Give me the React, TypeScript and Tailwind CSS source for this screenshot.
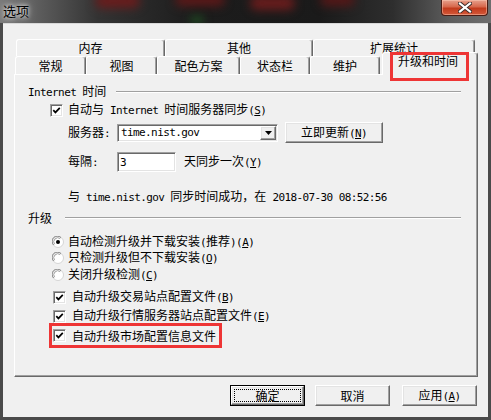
import React from 'react';

const MONO = "font-['DejaVu_Sans_Mono',monospace] text-[11px] tracking-[-0.6px]";

const A = ({ children }: { children: React.ReactNode }) => <span className={MONO}>{children}</span>;
const Mn = ({ k }: { k: string }) => (
  <span className={MONO}>
    (<span className="underline underline-offset-1">{k}</span>)
  </span>
);

const SUNKEN =
  'border border-t-[#a0a0a0] border-l-[#a0a0a0] border-b-white border-r-white shadow-[inset_1px_1px_0_#696969,inset_-1px_-1px_0_#e3e3e3] bg-white';
const RAISED =
  'border border-t-white border-l-white border-b-[#696969] border-r-[#696969] shadow-[inset_-1px_-1px_0_#a0a0a0,inset_1px_1px_0_#e3e3e3] bg-[#f0f0f0]';
const TAB =
  'h-full flex items-center justify-center border-t border-l border-r border-t-white border-l-white border-r-[#696969] shadow-[inset_-1px_0_0_#a0a0a0] rounded-t-[3px] bg-[#f0f0f0]';

function Check() {
  return (
    <div className={`w-[13px] h-[13px] shrink-0 flex items-center justify-center ${SUNKEN}`}>
      <svg width="9" height="9" viewBox="0 0 9 9">
        <path d="M1.3 4.2 L3.4 6.4 L7.8 1.8" stroke="#000" strokeWidth="1.7" fill="none" />
      </svg>
    </div>
  );
}

function Radio({ on }: { on?: boolean }) {
  return (
    <svg width="12" height="12" viewBox="0 0 12 12" className="shrink-0">
      <circle cx="6" cy="6" r="5.5" fill="#fff" stroke="#d4d4d4" />
      <path d="M1.6 9 A5 5 0 0 1 9 1.6" stroke="#808080" fill="none" />
      <path d="M2.6 8.2 A4 4 0 0 1 8.2 2.6" stroke="#a0a0a0" fill="none" />
      {on && <circle cx="6" cy="6" r="2" fill="#000" />}
    </svg>
  );
}

function Group({ children, gap }: { children: React.ReactNode; gap: string }) {
  return (
    <div className="flex items-center h-[12px] pl-[13px] pr-[16px]">
      <span className="whitespace-nowrap">{children}</span>
      <div className={`flex-1 h-[2px] border-t border-t-[#a0a0a0] border-b border-b-white ${gap}`} />
    </div>
  );
}

export default function App() {
  return (
    <div className="w-[491px] h-[420px] bg-[#4a4a4a] flex flex-col overflow-hidden font-['Noto_Sans_CJK_SC','Noto_Sans_CJK_JP',sans-serif] text-[12px] leading-[12px] text-black">
      {/* title bar */}
      <div className="relative h-[23px] shrink-0 flex items-start overflow-hidden bg-[linear-gradient(90deg,#7a7a7a_0%,#5c5c5c_8%,#333_20%,#1c1c1c_40%,#1a1a1a_65%,#2e2e2e_80%,#5e5e5e_92%,#6e6e6e_100%)]">
        <div className="absolute left-[95px] top-[-6px] w-[45px] h-[14px] rounded-full bg-[#6a1c1c] blur-[5px]" />
        <div className="absolute left-[175px] top-[-6px] w-[50px] h-[12px] rounded-full bg-[#5e1818] blur-[5px]" />
        <div className="absolute left-[250px] top-[-4px] w-[45px] h-[14px] rounded-full bg-[#6a1c1c] blur-[5px]" />
        <div className="absolute left-[320px] top-[-6px] w-[35px] h-[12px] rounded-full bg-[#571717] blur-[5px]" />
        <div className="absolute left-[190px] top-[16px] w-[14px] h-[8px] rounded-full bg-[#1f4a22] blur-[4px]" />
        <span className="relative ml-[3px] mt-[4px] text-[13px] leading-[14px] [text-shadow:0_0_4px_#fff,0_0_8px_rgba(255,255,255,0.7)]">
          选项
        </span>
        <div className="relative ml-auto mr-[3px] w-[47px] h-[16px] rounded-b-[4px] border border-[#4a1c14] border-t-0 bg-[linear-gradient(180deg,#e7a08c_0%,#d7684c_45%,#c23a1c_55%,#d4593a_100%)] shadow-[inset_0_0_0_1px_rgba(255,210,190,0.45)] flex items-center justify-center">
          <svg width="14" height="11" viewBox="0 0 14 11">
            <path d="M2 1.5 L12 9.5 M12 1.5 L2 9.5" stroke="#3a2a28" strokeWidth="4" strokeLinecap="square" />
            <path d="M2 1.5 L12 9.5 M12 1.5 L2 9.5" stroke="#fff" strokeWidth="2.2" strokeLinecap="square" />
          </svg>
        </div>
      </div>

      {/* client */}
      <div className="mx-[3px] h-[394px] shrink-0 bg-[#f0f0f0] border-t border-t-[#d8d8d8] pt-[15px] pl-[11px] flex flex-col">
        {/* tab row 1 */}
        <div className="flex h-[17px] ml-[2px]">
          <div className={`${TAB} w-[149px]`}>内存</div>
          <div className={`${TAB} w-[148px]`}>其他</div>
          <div className={`${TAB} w-[162px]`}>扩展统计</div>
        </div>
        {/* tab row 2 */}
        <div className="flex h-[18px] ml-[1px] items-end">
          <div className={`${TAB} w-[71px]`}>常规</div>
          <div className={`${TAB} w-[71px]`}>视图</div>
          <div className={`${TAB} w-[83px]`}>配色方案</div>
          <div className={`${TAB} w-[70px]`}>状态栏</div>
          <div className={`${TAB} w-[70px]`}>维护</div>
          <div className="relative z-10 ml-[2px] w-[96px] h-[23px] -mb-[1px] border-t border-l border-r border-t-white border-l-white border-r-[#696969] shadow-[inset_-1px_0_0_#a0a0a0] rounded-t-[3px] bg-[#f0f0f0] flex justify-center pt-[2px]">
            <span className="ml-[-4px]">升级和时间</span>
            <div className="absolute left-[7px] top-[-1px] w-[79px] h-[29px] border-[3px] border-[#ee3535]" />
          </div>
        </div>

        {/* panel */}
        <div className="w-[464px] h-[303px] shrink-0 border border-t-white border-l-white border-r-[#696969] border-b-[#696969] shadow-[inset_-1px_-1px_0_#a0a0a0] flex flex-col">
          <div className="mt-[11px]">
            <Group gap="ml-[10px]">
              <A>Internet </A>时间
            </Group>
          </div>

          <div className="mt-[6px] ml-[35px] h-[12px] flex items-center gap-[5px]">
            <Check />
            <span className="whitespace-nowrap">
              自动与<A> Internet </A>时间服务器同步<Mn k="S" />
            </span>
          </div>

          <div className="mt-[6px] ml-[53px] h-[21px] flex items-center">
            <span className="w-[49px] whitespace-nowrap">
              服务器<A>:</A>
            </span>
            <div className={`w-[161px] h-[18px] flex items-center ${SUNKEN} pl-[3px] pr-[1px]`}>
              <A>time.nist.gov</A>
              <div className={`ml-auto w-[16px] h-[14px] flex items-center justify-center ${RAISED}`}>
                <svg width="7" height="4" viewBox="0 0 7 4">
                  <path d="M0 0 H7 L3.5 4 Z" fill="#000" />
                </svg>
              </div>
            </div>
            <div className={`ml-[7px] w-[98px] h-[21px] flex items-center justify-center ${RAISED}`}>
              <span className="whitespace-nowrap">
                立即更新<Mn k="N" />
              </span>
            </div>
          </div>

          <div className="mt-[9px] ml-[53px] h-[20px] flex items-center">
            <span className="w-[49px] whitespace-nowrap">
              每隔<A>:</A>
            </span>
            <div className={`w-[59px] h-[20px] ${SUNKEN} pl-[2px] pt-[2px]`}>
              <A>3</A>
            </div>
            <span className="ml-[8px] whitespace-nowrap">
              天同步一次<Mn k="Y" />
            </span>
          </div>

          <div className="mt-[19px] ml-[53px] h-[12px] flex items-center whitespace-nowrap">
            <span>
              与<A> time.nist.gov </A>同步时间成功，在<A> 2018-07-30 08:52:56</A>
            </span>
          </div>

          <div className="mt-[9px]">
            <Group gap="ml-[13px]">升级</Group>
          </div>

          <div className="mt-[12px] ml-[37px] h-[12px] flex items-center gap-[4px] whitespace-nowrap">
            <Radio on />
            <span>
              自动检测升级并下载安装<A>(</A>推荐<A>)</A>
              <Mn k="A" />
            </span>
          </div>
          <div className="mt-[4px] ml-[37px] h-[12px] flex items-center gap-[4px] whitespace-nowrap">
            <Radio />
            <span>
              只检测升级但不下载安装<Mn k="O" />
            </span>
          </div>
          <div className="mt-[5px] ml-[37px] h-[12px] flex items-center gap-[4px] whitespace-nowrap">
            <Radio />
            <span>
              关闭升级检测<Mn k="C" />
            </span>
          </div>

          <div className="mt-[10px] ml-[38px] h-[12px] flex items-center gap-[6px] whitespace-nowrap">
            <Check />
            <span>
              自动升级交易站点配置文件<Mn k="B" />
            </span>
          </div>
          <div className="mt-[7px] ml-[38px] h-[12px] flex items-center gap-[6px] whitespace-nowrap">
            <Check />
            <span>
              自动升级行情服务器站点配置文件<Mn k="E" />
            </span>
          </div>
          <div className="mt-[1px] ml-[34px] w-[173px] h-[25px] border-[3px] border-[#ee3535] pl-[1px] flex items-center gap-[6px] whitespace-nowrap">
            <Check />
            <span>自动升级市场配置信息文件</span>
          </div>
        </div>

        {/* buttons */}
        <div className="flex mt-[8px] h-[21px]">
          <div className="ml-[216px] w-[75px] h-[21px] border border-black">
            <div className={`w-full h-full flex items-center justify-center ${RAISED} p-[2px]`}>
              <div className="w-full h-full border border-dotted border-black flex items-center justify-center">确定</div>
            </div>
          </div>
          <div className={`ml-[10px] w-[75px] h-[21px] flex items-center justify-center ${RAISED}`}>取消</div>
          <div className={`ml-[12px] w-[75px] h-[21px] flex items-center justify-center ${RAISED}`}>
            <span className="whitespace-nowrap">
              应用<Mn k="A" />
            </span>
          </div>
        </div>
      </div>
    </div>
  );
}
